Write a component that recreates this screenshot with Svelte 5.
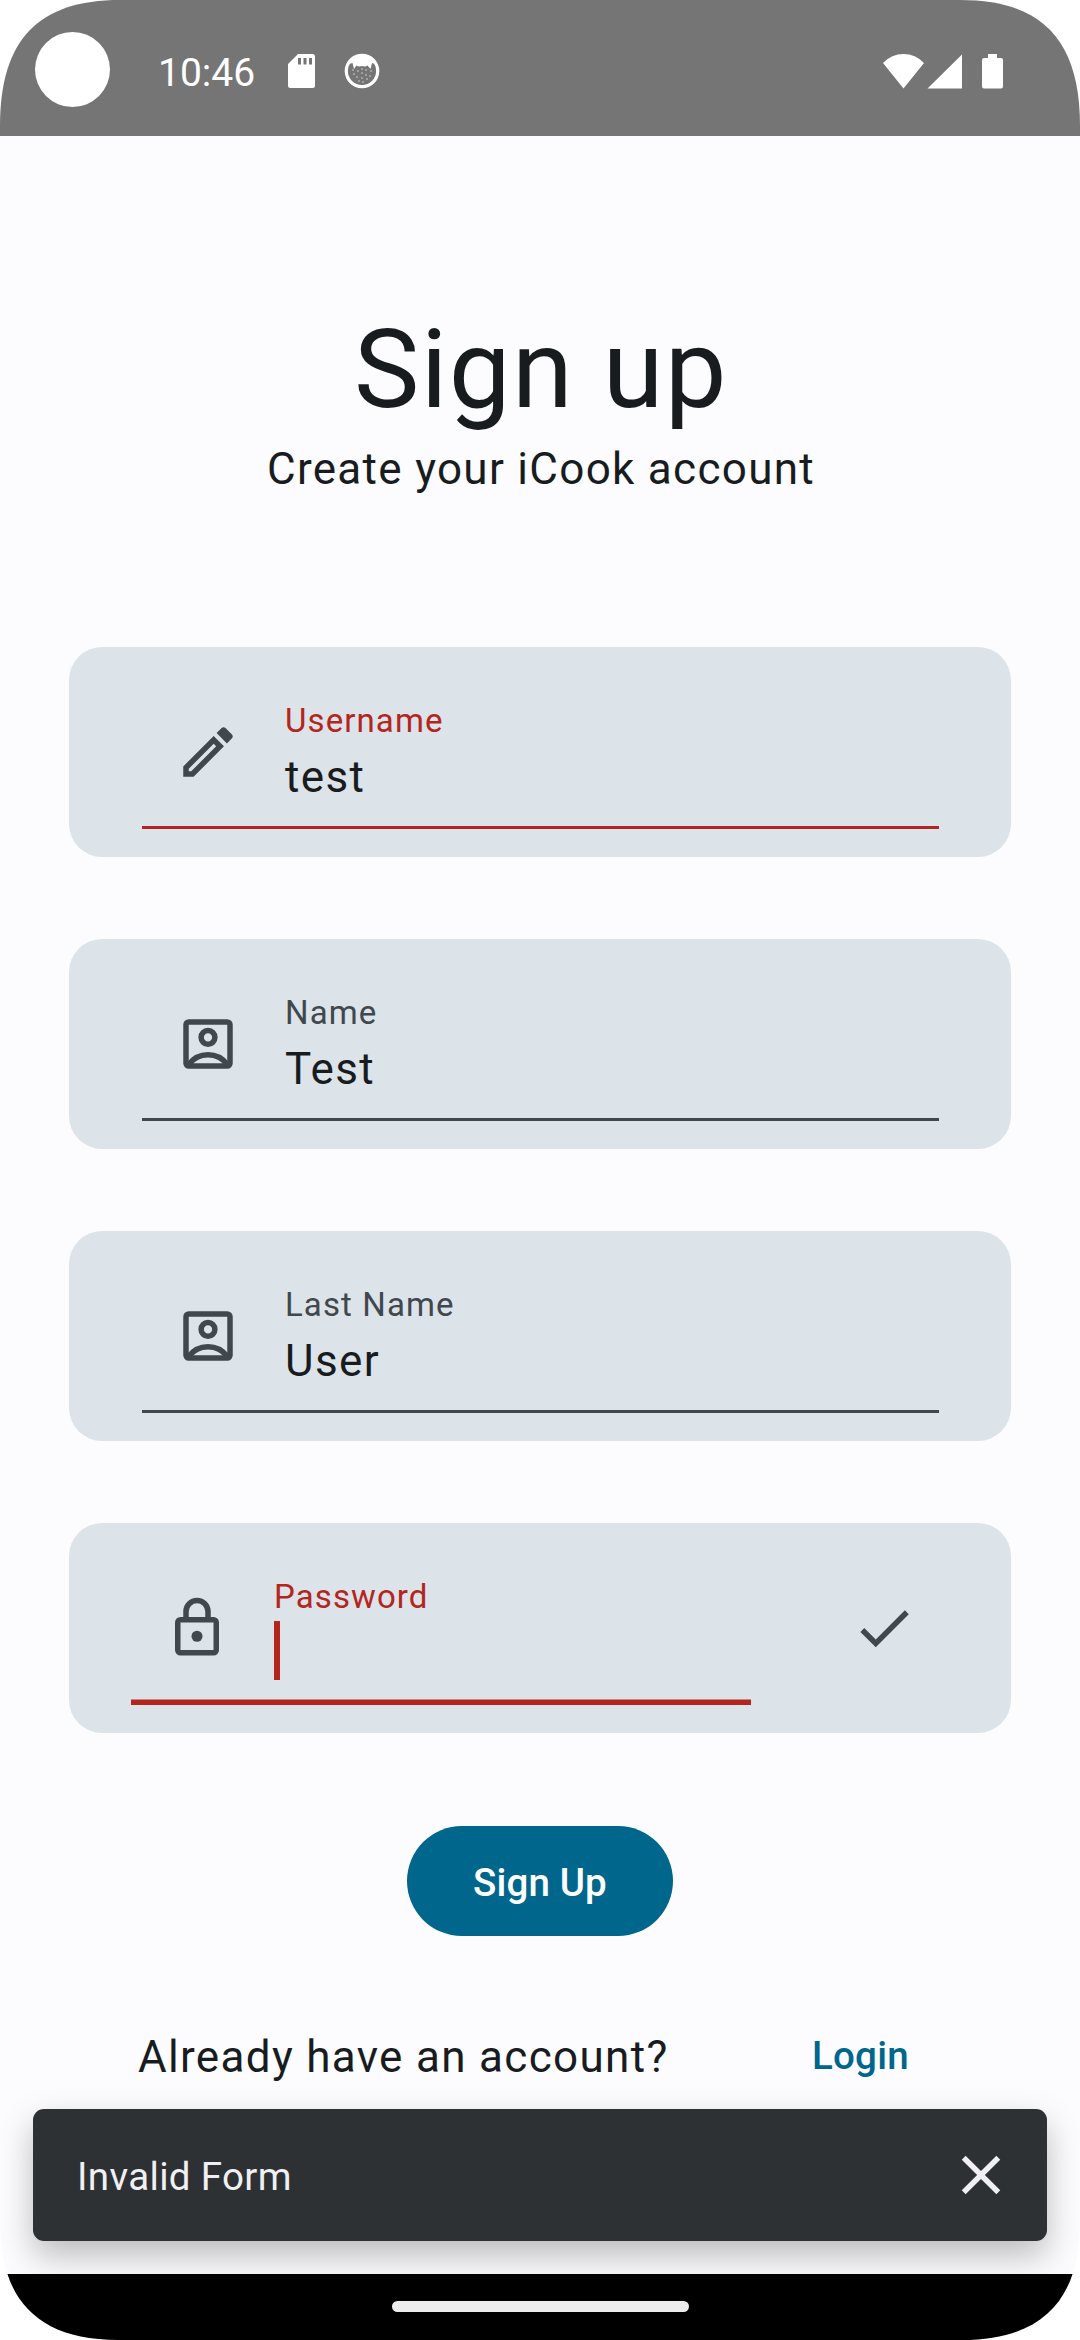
<script>
  const fields = [
    { label: 'Username', value: 'test', icon: 'edit', error: true },
    { label: 'Name', value: 'Test', icon: 'account', error: false },
    { label: 'Last Name', value: 'User', icon: 'account', error: false },
  ];
  // Small dots on the face of the debug notification icon
  const specks = [
    [9, 17], [14, 18], [18, 16], [22, 17], [10, 21], [13, 24], [18, 20],
    [22, 22], [27, 18], [18, 25], [23, 26], [15, 28], [19, 29], [26, 23],
  ];
</script>

<div class="screen">
  <header class="status">
    <div class="camera"></div>
    <span class="time">10:46</span>
    <svg class="sd" viewBox="0 0 27 34" width="27" height="34">
      <path fill="#fff" fill-rule="evenodd" d="M10 0H24.500Q27 0 27 2.500V31.500Q27 34 24.500 34H2.500Q0 34 0 31.500V10ZM10 4V10.500H13V4ZM15.500 4V10.500H18.500V4ZM21 4V10.500H24V4Z" />
    </svg>
    <svg class="face" viewBox="0 0 36 36" width="36" height="36">
      <circle cx="18" cy="18" r="15.700" fill="none" stroke="#fff" stroke-width="3.200" />
      <path fill="#fff" d="M5 11Q9 2 18 2T31 11L28 10L26.500 16L23.500 12.500Q21 14 18 13Q15 14 12.500 12.500L10 16L8.500 10Z" />
      {#each specks as [x, y]}
        <circle cx={x} cy={y} r=".8" fill="#fff" opacity=".7" />
      {/each}
    </svg>
    <div class="system">
      <svg viewBox="0 0 121 36" width="121" height="36">
        <path fill="#fff" d="M0 10Q8.500 1 20.500 1T41 10L20.500 35.500ZM44.500 35.500L79 1.500V35.500ZM105 1h9v4h4q2 0 2 2v26.500q0 2-2 2h-17q-2 0-2-2V7q0-2 2-2h4Z" />
      </svg>
    </div>
  </header>

  <main>
    <h1>Sign up</h1>
    <p class="subtitle">Create your iCook account</p>

    <form>
      {#each fields as f}
        <div class="card">
          <div class="field" class:error={f.error}>
            <svg viewBox="0 0 24 24" width="66" height="66">
              {#if f.icon === 'edit'}
                <path fill="currentColor" d="M14.060 9.020l.92.92L5.920 19H5v-.92l9.060-9.060M17.660 3c-.25 0-.51.1-.7.29l-1.830 1.830 3.750 3.750 1.830-1.830c.39-.39.39-1.020 0-1.410l-2.340-2.340c-.2-.2-.45-.29-.71-.29zm-3.600 3.190L3 17.250V21h3.750L17.810 9.940l-3.750-3.750z" />
              {:else}
                <g fill="none" stroke="currentColor" stroke-width="2">
                  <rect x="4" y="4" width="16" height="16" rx="1" />
                  <circle cx="12" cy="9.600" r="2.500" />
                  <path d="M5 19.400A8.700 8.700 0 0 1 19 19.400" />
                </g>
              {/if}
            </svg>
            <div class="text">
              <span class="label">{f.label}</span>
              <span class="value">{f.value}</span>
            </div>
          </div>
        </div>
      {/each}

      <div class="card password">
        <div class="field error focused">
          <svg viewBox="0 0 24 24" width="66" height="66">
            <g fill="none" stroke="currentColor" stroke-width="2">
              <rect x="5" y="9" width="14" height="12" rx="1" />
              <path d="M8 8.500V6a4 4 0 0 1 8 0v2.500" />
            </g>
            <circle cx="12" cy="15" r="2" fill="currentColor" />
          </svg>
          <div class="text">
            <span class="label">Password</span>
            <span class="caret"></span>
          </div>
        </div>
        <svg class="check" viewBox="0 0 24 24" width="66" height="66">
          <path fill="currentColor" d="M9 16.170L4.830 12l-1.420 1.410L9 19 21 7l-1.410-1.410z" />
        </svg>
      </div>

      <button type="button" class="submit">Sign Up</button>
    </form>

    <div class="signin">
      <span class="question">Already have an account?</span>
      <a class="login" href="#login">Login</a>
    </div>
  </main>

  <div class="snackbar">
    <span class="message">Invalid Form</span>
    <svg viewBox="0 0 24 24" width="66" height="66">
      <path fill="#f0f0f4" d="M19 6.410L17.590 5 12 10.590 6.410 5 5 6.410 10.590 12 5 17.590 6.410 19 12 13.410 17.590 19 19 17.590 13.410 12z" />
    </svg>
  </div>

  <footer><div class="pill"></div></footer>
</div>

<style>
  :global(body) {
    margin: 0;
    background: #fff;
  }
  .screen {
    position: relative;
    display: flex;
    flex-direction: column;
    width: 1080px;
    height: 2340px;
    overflow: hidden;
    background: #fcfcff;
    color: #191c1e;
    font-family: Roboto, sans-serif;
    clip-path: path('M0 126C0 40 38 0 120 0H960C1042 0 1080 40 1080 126V2222C1080 2298 1044 2340 962 2340H118C36 2340 0 2298 0 2222Z');
  }
  .status {
    display: flex;
    align-items: center;
    box-sizing: border-box;
    height: 136px;
    padding: 6px 76px 0 35px;
    background: #757575;
    color: #fff;
  }
  .camera {
    width: 75px;
    height: 75px;
    margin: -3px 48px 0 0;
    border-radius: 50%;
    background: #fff;
  }
  .time {
    width: 130px;
    margin-top: 3px;
    font-size: 39px;
    line-height: 46px;
  }
  .face {
    margin-left: 29px;
  }
  .system {
    display: flex;
    margin-left: auto;
  }
  main {
    display: flex;
    flex: 1;
    flex-direction: column;
    align-items: center;
  }
  h1 {
    margin: 169px 0 0;
    padding-left: 2px;
    font-size: 110px;
    font-weight: 400;
    line-height: 129px;
    letter-spacing: 1.375px;
  }
  .subtitle {
    margin: 2px 0 0;
    padding-left: 2px;
    font-size: 44px;
    line-height: 66px;
    letter-spacing: 1.3px;
  }
  form {
    display: flex;
    flex-direction: column;
    align-items: center;
    gap: 82px;
    margin-top: 145px;
  }
  .card {
    display: flex;
    align-items: center;
    box-sizing: border-box;
    width: 942px;
    height: 210px;
    padding: 28px 72px 28px 73px;
    border-radius: 33px;
    background: #dce3e9;
    color: #41484d;
  }
  .field {
    display: flex;
    align-items: center;
    gap: 44px;
    flex: 1;
    box-sizing: border-box;
    height: 154px;
    padding-left: 33px;
    box-shadow: inset 0 -3px #41484d;
  }
  .text {
    display: flex;
    flex-direction: column;
    gap: 1px;
    height: 112px;
    margin-top: 6px;
  }
  .label {
    font-size: 33px;
    line-height: 44px;
    letter-spacing: 1.1px;
  }
  .value {
    color: #191c1e;
    font-size: 44px;
    line-height: 66px;
    letter-spacing: 1.375px;
  }
  .error {
    box-shadow: inset 0 -3px #b3261e;
  }
  .error .label {
    color: #b3261e;
  }
  .password {
    padding: 28px 94px 28px 62px;
  }
  .focused {
    flex: none;
    width: 620px;
    box-shadow: inset 0 -5.500px #b3261e;
  }
  .caret {
    width: 5.500px;
    height: 59px;
    margin-top: 1px;
    background: #b3261e;
  }
  .check {
    margin-left: auto;
  }
  .submit {
    width: 266px;
    height: 110px;
    margin-top: 11px;
    padding: 2px 0 0;
    border: 0;
    border-radius: 55px;
    background: #00668b;
    color: #fff;
    font: 500 38.500px/55px Roboto, sans-serif;
    letter-spacing: 0.150px;
  }
  .signin {
    display: flex;
    align-items: center;
    justify-content: space-between;
    box-sizing: border-box;
    width: 100%;
    height: 110px;
    margin-top: 66px;
    padding: 0 171px 0 138px;
  }
  .question {
    font-size: 44px;
    line-height: 66px;
    letter-spacing: 1.320px;
  }
  .login {
    padding-bottom: 3px;
    color: #00668b;
    font-size: 38.500px;
    font-weight: 500;
    line-height: 55px;
    letter-spacing: 0.275px;
    text-decoration: none;
  }
  .snackbar {
    position: absolute;
    left: 33px;
    right: 33px;
    bottom: 99px;
    display: flex;
    align-items: center;
    justify-content: space-between;
    box-sizing: border-box;
    height: 132px;
    padding: 0 33px 0 44px;
    border-radius: 11px;
    background: #2e3133;
    color: #f0f0f4;
    font-size: 38.500px;
    line-height: 55px;
    letter-spacing: 0.350px;
    box-shadow: 0 15px 34px rgba(0, 0, 0, 0.26);
  }
  .message {
    padding-top: 2px;
  }
  footer {
    position: relative;
    display: flex;
    justify-content: center;
    box-sizing: border-box;
    height: 66px;
    padding-top: 27px;
    background: #000;
  }
  .pill {
    width: 297px;
    height: 11px;
    border-radius: 6px;
    background: #ececec;
  }
</style>
